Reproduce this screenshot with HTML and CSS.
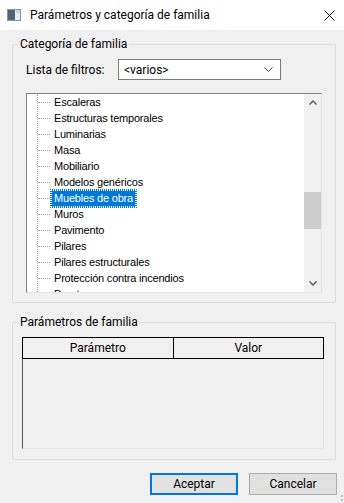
FILE: index.html
```html
<!DOCTYPE html>
<html lang="es">

<head>
  <meta charset="UTF-8">
  <meta name="viewport" content="width=device-width, initial-scale=1.0">
  <title>Parámetros y categoría de familia</title>
  <link rel="stylesheet" href="styles.css">
</head>

<body>
  <div class="titlebar">
    <svg class="app-icon" width="14" height="12" viewBox="0 0 14 12">
      <rect x="0.5" y="0.5" width="13" height="11" fill="#e8ecf0" stroke="#8a96a3" />
      <rect x="1" y="1" width="7" height="10" fill="#4f6377" />
      <rect x="9" y="1" width="4" height="3" fill="#c9d3dc" />
    </svg>
    <span class="title">Parámetros y categoría de familia</span>
    <svg class="close" width="11" height="11" viewBox="0 0 11 11">
      <path d="M0.5 0.5 L10.5 10.5 M10.5 0.5 L0.5 10.5" stroke="#111" stroke-width="1" fill="none" />
    </svg>
  </div>

  <fieldset class="group group-cat">
    <legend>Categoría de familia</legend>
    <div class="filter-row">
      <label>Lista de filtros:</label>
      <div class="combo">
        <span>&lt;varios&gt;</span>
        <svg width="9" height="5" viewBox="0 0 9 5">
          <path d="M0.5 0.5 L4.5 4.5 L8.5 0.5" stroke="#444" fill="none" />
        </svg>
      </div>
    </div>

    <div class="listbox">
      <ul class="tree">
        <li><span>Escaleras</span></li>
        <li><span>Estructuras temporales</span></li>
        <li><span>Luminarias</span></li>
        <li><span>Masa</span></li>
        <li><span>Mobiliario</span></li>
        <li><span>Modelos genéricos</span></li>
        <li class="selected"><span>Muebles de obra</span></li>
        <li><span>Muros</span></li>
        <li><span>Pavimento</span></li>
        <li><span>Pilares</span></li>
        <li><span>Pilares estructurales</span></li>
        <li><span>Protección contra incendios</span></li>
        <li><span>Puertas</span></li>
      </ul>
      <div class="scrollbar">
        <div class="arrow">
          <svg width="8" height="5" viewBox="0 0 8 5"><path d="M0.5 4.5 L4 1 L7.5 4.5" stroke="#606060" stroke-width="1.5" fill="none" /></svg>
        </div>
        <div class="track">
          <div class="thumb"></div>
        </div>
        <div class="arrow">
          <svg width="8" height="5" viewBox="0 0 8 5"><path d="M0.5 0.5 L4 4 L7.5 0.5" stroke="#606060" stroke-width="1.5" fill="none" /></svg>
        </div>
      </div>
    </div>
  </fieldset>

  <fieldset class="group group-params">
    <legend>Parámetros de familia</legend>
    <div class="param-table">
      <div class="param-head">
        <div class="col">Parámetro</div>
        <div class="col">Valor</div>
      </div>
      <div class="param-body"></div>
    </div>
  </fieldset>

  <div class="buttons">
    <button class="default">Aceptar</button>
    <button>Cancelar</button>
  </div>
  <div class="grip"></div>
</body>

</html>
```

FILE: styles.css
```css
body {
  margin: 0;
  width: 344px;
  height: 503px;
  background: #f0f0f0;
  font-family: Roboto, "Noto Sans", sans-serif;
  font-size: 12px;
  color: #000;
  overflow: hidden;
  position: relative;
}

.titlebar {
  height: 30px;
  background: #fff;
  display: flex;
  align-items: center;
}

.app-icon {
  margin-left: 7px;
  margin-right: 9px;
}

.title {
  flex: 1;
  font-size: 12px;
  line-height: 14px;
}

.close {
  margin-right: 9px;
}

/* group boxes */
.group {
  margin: 7px 8px 0 12px;
  padding: 0 11px 9px 13px;
  border: 1px solid #dcdcdc;
  border-radius: 2px;
  min-width: 0;
}

.group legend {
  padding: 0 2px;
  margin-left: -8px;
  line-height: 14px;
}

.filter-row {
  display: flex;
  align-items: center;
  margin-top: 8px;
}

.filter-row label {
  width: 92px;
}

.combo {
  width: 149px;
  height: 19px;
  background: #fff;
  border: 1px solid #7a7a7a;
  display: flex;
  align-items: center;
  justify-content: space-between;
  padding: 0 7px 0 5px;
}

/* tree list */
.listbox {
  margin-top: 13px;
  margin-right: 2px;
  height: 198px;
  display: flex;
  background: #fff;
  border-top: 1px solid #828282;
  border-left: 1px solid #828282;
  border-right: 1px solid #e3e3e3;
  border-bottom: 1px solid #e3e3e3;
  overflow: hidden;
}

.tree {
  flex: 1;
  list-style: none;
  margin: 0 0 0 10px;
  padding: 0;
  border-left: 1px dotted #a0a0a0;
  font-family: "Liberation Sans", Arial, sans-serif;
  font-size: 11px;
  letter-spacing: -0.2px;
  height: 198px;
}

.tree li {
  height: 16px;
  line-height: 16px;
  display: flex;
  align-items: center;
  white-space: nowrap;
}

.tree li::before {
  content: "";
  width: 12px;
  border-top: 1px dotted #a0a0a0;
  margin-right: 1px;
}

.tree li span {
  padding: 0 2px;
  line-height: 15px;
  border: 1px solid transparent;
}

.tree li.selected span {
  background: #0078d7;
  color: #fff;
  border: 1px dotted #fff;
  outline: 1px dotted #0078d7;
}

.scrollbar {
  width: 17px;
  background: #f0f0f0;
  display: flex;
  flex-direction: column;
}

.arrow {
  height: 17px;
  display: flex;
  align-items: center;
  justify-content: center;
}

.track {
  flex: 1;
}

.thumb {
  margin-top: 81px;
  height: 37px;
  background: #cdcdcd;
}

/* parameters table */
.group-params {
  margin-top: 12px;
  padding: 0 11px 10px 9px;
}

.group-params legend {
  margin-left: -4px;
}

.param-table {
  margin-top: 8px;
  height: 112px;
  display: flex;
  flex-direction: column;
}

.param-head {
  display: flex;
  height: 20px;
  border: 1px solid #000;
  background: #f0f0f0;
}

.param-head .col {
  flex: 1;
  text-align: center;
  line-height: 20px;
}

.param-head .col + .col {
  border-left: 1px solid #000;
}

.param-body {
  flex: 1;
  border-left: 1px solid #555;
  border-right: 1px solid #e3e3e3;
  border-bottom: 1px solid #e3e3e3;
}

/* buttons */
.buttons {
  display: flex;
  justify-content: flex-end;
  gap: 11px;
  margin: 13px 7px 0 0;
}

.buttons button {
  width: 88px;
  height: 22px;
  background: #e1e1e1;
  border: 1px solid #adadad;
  font-family: Roboto, "Noto Sans", sans-serif;
  font-size: 12px;
  padding: 0;
}

.buttons button.default {
  border: 2px solid #0078d7;
}

.grip {
  position: absolute;
  right: 1px;
  bottom: 2px;
  width: 3px;
  height: 6px;
  border-right: 2px dotted #bdbdbd;
}
```
